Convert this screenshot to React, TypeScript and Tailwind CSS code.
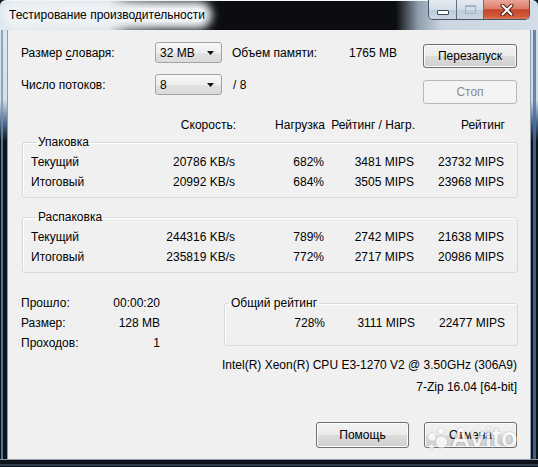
import type { ReactNode } from "react";

// 7-Zip benchmark dialog, Windows 7 Aero frame

function Combo({ value }: { value: string }) {
  return (
    <div className="w-[67px] h-[21px] flex items-center justify-between pl-[4px] pr-[7px] rounded-[3px] border border-[#a3a3a3] bg-[linear-gradient(to_bottom,#f7f7f7_0%,#efefef_50%,#e3e3e3_51%,#dadada_100%)]">
      <span>{value}</span>
      <svg width="7" height="4" viewBox="0 0 7 4">
        <path d="M0 0h7L3.5 4z" fill="#111" />
      </svg>
    </div>
  );
}

function Btn({ children, disabled, size }: { children: ReactNode; disabled?: boolean; size: "top" | "bottom" }) {
  const dims = size === "top" ? "w-[94px] h-[24px]" : "w-[93px] h-[26px]";
  const look = disabled
    ? "border-[#b5b9bc] bg-[#f4f4f4] text-[#8a8a8a]"
    : "border-[#707070] bg-[linear-gradient(to_bottom,#f2f2f2_0%,#ebebeb_50%,#dddddd_51%,#cfcfcf_100%)] shadow-[inset_0_0_0_1px_#fbfbfb]";
  return <div className={`${dims} ${look} flex items-center justify-center rounded-[3px] border`}>{children}</div>;
}

function TitleBar() {
  return (
    <div className="h-[30px] flex items-start rounded-t-[6px] border-t border-[#f3f6f9] bg-[linear-gradient(to_right,#dde6ee_0px,#d5dee7_108px,#3a434c_130px,#0b0d11_165px,#0b0d11_396px,#8d9cab_418px,#cbd6e1_442px,#d3dde7_100%)]">
      <span className="ml-[9px] mt-[7px] leading-[14px] rounded-[8px] bg-[#eef2f5] shadow-[0_0_8px_7px_#eef2f5] font-['Liberation_Sans',Arial,sans-serif]">
        Тестирование производительности
      </span>
      <div className="ml-auto mr-[8px] -mt-[1px] flex h-[20px] rounded-b-[5px] border border-t-0 border-[#44566a] overflow-hidden">
        <div className="w-[28px] h-full flex items-start justify-center border-r border-[#5d7086] bg-[linear-gradient(to_bottom,#e4eaf0_0%,#d3dde7_50%,#bccbd9_51%,#c9d6e2_100%)]">
          <div className="mt-[10px] w-[12px] h-[5px] bg-white border border-[#394859] rounded-[1px]" />
        </div>
        <div className="w-[27px] h-full flex items-start justify-center border-r border-[#5d7086] bg-[linear-gradient(to_bottom,#e4eaf0_0%,#d3dde7_50%,#bccbd9_51%,#c9d6e2_100%)]">
          <div className="mt-[5px] w-[11px] h-[9px] border border-[#a5b3c2] border-t-2 rounded-[1px]" />
        </div>
        <div className="w-[45px] h-full flex items-center justify-center bg-[linear-gradient(to_bottom,#e9a798_0%,#dc7d67_45%,#c8452c_52%,#d1583b_85%,#e07a55_100%)]">
          <svg width="14" height="12" viewBox="0 0 14 12">
            <path d="M2.5 1.5l9 9M11.5 1.5l-9 9" stroke="#4a1c14" strokeWidth="4" strokeLinecap="round" />
            <path d="M2.5 1.5l9 9M11.5 1.5l-9 9" stroke="#ffffff" strokeWidth="2" strokeLinecap="round" />
          </svg>
        </div>
      </div>
    </div>
  );
}

function Group({ title, children, className }: { title: string; children: ReactNode; className: string }) {
  return (
    <fieldset className={`${className} rounded-[3px] border border-[#d3dbe0] shadow-[inset_1px_1px_0_#ffffff]`}>
      <legend className="ml-[5px] px-[2px] leading-[14px]">{title}</legend>
      {children}
    </fieldset>
  );
}

const rowGrid = "grid grid-cols-[114px_90px_89px_90px_90px] h-[20px] items-center";

function DataRow({ cells }: { cells: string[] }) {
  return (
    <div className={rowGrid}>
      <span>{cells[0]}</span>
      <span className="text-right">{cells[1]}</span>
      <span className="text-right">{cells[2]}</span>
      <span className="text-right">{cells[3]}</span>
      <span className="text-right">{cells[4]}</span>
    </div>
  );
}

function Client() {
  return (
    <div className="w-[522px] h-[429px] bg-[#f0f0f0] pl-[13px] pr-[12px] pt-[12px] flex flex-col">
      <div className="flex">
        <div className="flex flex-col gap-[11px]">
          <div className="flex items-center h-[21px]">
            <span className="w-[134px]">
              Размер <span className="underline underline-offset-2">с</span>ловаря:
            </span>
            <Combo value="32 MB" />
            <div className="ml-[10px] w-[165px] flex justify-between">
              <span>Объем памяти:</span>
              <span>1765 MB</span>
            </div>
          </div>
          <div className="flex items-center h-[21px]">
            <span className="w-[134px]">Число потоков:</span>
            <Combo value="8" />
            <span className="ml-[11px]">/ 8</span>
          </div>
        </div>
        <div className="ml-auto mr-[1px] mt-[2px] flex flex-col gap-[12px]">
          <Btn size="top">Перезапуск</Btn>
          <Btn size="top" disabled>
            Стоп
          </Btn>
        </div>
      </div>

      <div className="mt-[14px] ml-[11px] grid grid-cols-[114px_90px_89px_90px_90px] h-[14px]">
        <span />
        <span className="text-right">Скорость:</span>
        <span className="text-right">Нагрузка</span>
        <span className="text-right">Рейтинг / Нагр.</span>
        <span className="text-right">Рейтинг</span>
      </div>

      <Group title="Упаковка" className="mt-[3px] ml-[1px] w-[496px] pl-[8px] pt-[3px] pb-[5px]">
        <DataRow cells={["Текущий", "20786 KB/s", "682%", "3481 MIPS", "23732 MIPS"]} />
        <DataRow cells={["Итоговый", "20992 KB/s", "684%", "3505 MIPS", "23968 MIPS"]} />
      </Group>

      <Group title="Распаковка" className="mt-[12px] ml-[1px] w-[496px] pl-[8px] pt-[3px] pb-[5px]">
        <DataRow cells={["Текущий", "244316 KB/s", "789%", "2742 MIPS", "21638 MIPS"]} />
        <DataRow cells={["Итоговый", "235819 KB/s", "772%", "2717 MIPS", "20986 MIPS"]} />
      </Group>

      <div className="mt-[20px] flex items-start">
        <div className="w-[139px] grid grid-cols-[70px_69px] auto-rows-[20px] items-center">
          <span>Прошло:</span>
          <span className="text-right">00:00:20</span>
          <span>Размер:</span>
          <span className="text-right">128 MB</span>
          <span>Проходов:</span>
          <span className="text-right">1</span>
        </div>
        <fieldset className="ml-[64px] mt-[3px] w-[294px] pt-[3px] pb-[12px] rounded-[3px] border border-[#d3dbe0] shadow-[inset_1px_1px_0_#ffffff]">
          <legend className="ml-[4px] px-[2px] leading-[14px]">Общий рейтинг</legend>
          <div className="grid grid-cols-[100px_90px_90px] h-[20px] items-center">
            <span className="text-right">728%</span>
            <span className="text-right">3111 MIPS</span>
            <span className="text-right">22477 MIPS</span>
          </div>
        </fieldset>
      </div>

      <div className="mt-[2px] h-[20px] flex items-center justify-end pr-[1px]">
        Intel(R) Xeon(R) CPU E3-1270 V2 @ 3.50GHz (306A9)
      </div>
      <div className="mt-[2px] h-[20px] flex items-center justify-end pr-[1px]">7-Zip 16.04 [64-bit]</div>

      <div className="mt-[25px] mr-[1px] flex justify-end gap-[15px]">
        <Btn size="bottom">Помощь</Btn>
        <Btn size="bottom">Отмена</Btn>
      </div>
    </div>
  );
}

function AvitoMark() {
  return (
    <div className="absolute left-[427px] top-[424px] flex items-center gap-[2px] pointer-events-none opacity-75">
      <svg width="22" height="26" viewBox="0 0 22 26">
        <g fill="#ffffff" stroke="#b9b9b9" strokeWidth="0.6">
          <circle cx="14" cy="6" r="3.2" />
          <circle cx="5" cy="12" r="4.2" />
          <circle cx="14.5" cy="17" r="6" />
          <circle cx="4.5" cy="21.5" r="2.6" />
        </g>
      </svg>
      <span className="font-['Liberation_Sans',Arial,sans-serif] font-bold text-[27px] leading-[28px] text-white [text-shadow:0_0_1px_rgba(0,0,0,0.45),0_0_2px_rgba(0,0,0,0.2)]">
        Avito
      </span>
    </div>
  );
}

export default function App() {
  return (
    <div className="relative w-[538px] h-[467px] overflow-hidden flex flex-col bg-[#0c1116] text-[12px] leading-[14px] text-black font-['Liberation_Sans',Arial,sans-serif]">
      <TitleBar />
      <div className="flex">
        <div className="w-[8px] h-[429px] border-r border-[#8e9dad] bg-[linear-gradient(to_right,transparent_1px,rgba(110,145,185,0.75)_1px,rgba(110,145,185,0.75)_3px,transparent_3px),linear-gradient(to_bottom,#dde6ee_0px,#d6dfe8_70px,#56708e_92px,#0d1318_112px,#0d1318_100%)]" />
        <Client />
        <div className="w-[8px] h-[429px] border-l border-[#8e9dad] bg-[linear-gradient(to_left,transparent_2px,rgba(70,115,165,0.8)_2px,rgba(70,115,165,0.8)_5px,transparent_5px),linear-gradient(to_bottom,#d3dde7_0px,#cfd9e3_70px,#4b6785_92px,#0d1318_112px,#0d1318_100%)]" />
      </div>
      <div className="h-[8px] border-t border-[#8e9dad] bg-[linear-gradient(to_bottom,#0d1318_0px,#0d1318_4px,#52677c_5px,#0d1318_6px)]" />
      <AvitoMark />
    </div>
  );
}
